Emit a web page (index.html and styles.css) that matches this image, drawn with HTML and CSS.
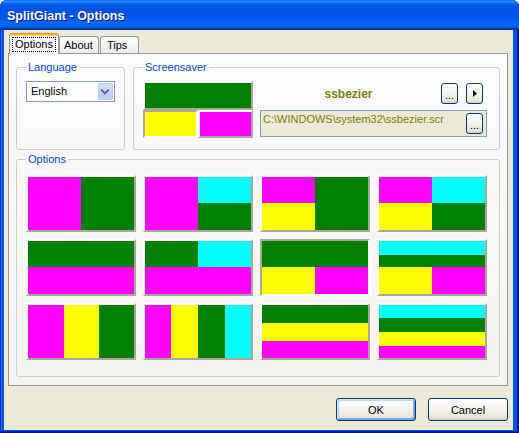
FILE: index.html
```html
<!DOCTYPE html>
<html lang="en">
<head>
<meta charset="utf-8">
<title>SplitGiant - Options</title>
<link rel="stylesheet" href="styles.css">
</head>
<body>
<div class="window">
  <div class="titlebar"><span class="title">SplitGiant - Options</span></div>
  <div class="client">
    <div class="tabs">
      <div class="tab active"><span class="focus">Options</span></div>
      <div class="tab about">About</div>
      <div class="tab tips">Tips</div>
    </div>
    <div class="panel">
      <div class="toprow">
        <fieldset class="group lang">
          <legend>Language</legend>
          <div class="combo">
            <span class="combo-text">English</span>
            <span class="combo-btn"><svg width="15" height="17" viewBox="0 0 15 17"><path d="M3.5 6.5 L7.5 10.5 L11.5 6.5" fill="none" stroke="#4d6185" stroke-width="2"/></svg></span>
          </div>
        </fieldset>
        <fieldset class="group saver">
          <legend>Screensaver</legend>
          <div class="saver-body">
            <div class="preview">
              <div class="pv pv-top raised g"></div>
              <div class="pv-row">
                <div class="pv sunken y"></div>
                <div class="pv raised m"></div>
              </div>
            </div>
            <div class="saver-right">
              <div class="saver-top">
                <span class="saver-name">ssbezier</span>
                <button class="btn small">...</button>
                <button class="btn small"><svg width="4" height="7" viewBox="0 0 4 7"><polygon points="0,0 4,3.5 0,7" fill="#000"/></svg></button>
              </div>
              <div class="pathbox">
                <span class="path">C:\WINDOWS\system32\ssbezier.scr</span>
                <button class="btn small">...</button>
              </div>
            </div>
          </div>
        </fieldset>
      </div>
      <fieldset class="group options">
        <legend>Options</legend>
        <div class="grid">
          <div class="opt"><div class="face cols2"><span class="m"></span><span class="g"></span></div></div>
          <div class="opt"><div class="face grid22"><span class="m tall"></span><span class="c"></span><span class="g"></span></div></div>
          <div class="opt"><div class="face grid22"><span class="m"></span><span class="g tall"></span><span class="y"></span></div></div>
          <div class="opt"><div class="face grid22"><span class="m"></span><span class="c"></span><span class="y"></span><span class="g"></span></div></div>

          <div class="opt"><div class="face rows2"><span class="g"></span><span class="m"></span></div></div>
          <div class="opt"><div class="face grid22"><span class="g"></span><span class="c"></span><span class="m wide"></span></div></div>
          <div class="opt pressed"><div class="face grid22"><span class="g wide"></span><span class="y"></span><span class="m"></span></div></div>
          <div class="opt"><div class="face stack22"><span class="c wide"></span><span class="g wide"></span><span class="y"></span><span class="m"></span></div></div>

          <div class="opt"><div class="face cols3"><span class="m"></span><span class="y"></span><span class="g"></span></div></div>
          <div class="opt"><div class="face cols4"><span class="m"></span><span class="y"></span><span class="g"></span><span class="c"></span></div></div>
          <div class="opt"><div class="face rows3"><span class="g"></span><span class="y"></span><span class="m"></span></div></div>
          <div class="opt"><div class="face rows4"><span class="c"></span><span class="g"></span><span class="y"></span><span class="m"></span></div></div>
        </div>
      </fieldset>
    </div>
    <div class="actions">
      <button class="btn big default">OK</button>
      <button class="btn big">Cancel</button>
    </div>
  </div>
</div>
</body>
</html>
```
FILE: styles.css
```css
* { box-sizing: border-box; }
html, body { margin: 0; padding: 0; }
body {
  width: 519px;
  height: 433px;
  overflow: hidden;
  background: #ffffff;
  font-family: "Liberation Sans", Arial, sans-serif;
  font-size: 11px;
  color: #000;
}

.window {
  width: 519px;
  height: 433px;
  display: flex;
  flex-direction: column;
  background: #0055e5;
  border-radius: 7px 7px 0 0;
  box-shadow: inset -1px -1px 0 #00138c, inset 1px 0 0 #0831d9, inset -2px -2px 0 #001ea0, inset 2px 0 0 #166aee;
}

.titlebar {
  height: 30px;
  flex: none;
  padding: 9px 0 0 7px;
  border-radius: 7px 7px 0 0;
  background: linear-gradient(to bottom, #0058ee 0%, #3593ff 4%, #288eff 6%, #127dff 8%, #036ffc 10%, #0262ee 14%, #0057e5 20%, #0054e3 24%, #0055eb 56%, #005bf5 66%, #026afe 76%, #0062ef 86%, #0052d6 92%, #0040ab 94%, #003092 100%);
}
.title {
  font-weight: bold;
  font-size: 12.5px;
  line-height: 14px;
  color: #fff;
  text-shadow: 1px 1px 0 #0a1883;
}

.client {
  flex: 1;
  margin: 0 6px 3px 4px;
  padding: 3px 5px 0 4px;
  background: #ece9d8;
  display: flex;
  flex-direction: column;
}

.tabs {
  height: 20px;
  display: flex;
  align-items: flex-end;
  padding-left: 1px;
}
.tab {
  height: 17px;
  border: 1px solid #919b9c;
  border-bottom: none;
  border-radius: 3px 3px 0 0;
  background: linear-gradient(#ffffff, #ecebe5);
  line-height: 16px;
  white-space: nowrap;
}
.tab.about { width: 40px; padding-left: 4px; }
.tab.tips { width: 39px; margin-left: 1px; padding-left: 6px; }
.tab.active {
  width: 50px;
  height: 21px;
  margin-bottom: -1px;
  position: relative;
  z-index: 1;
  border-top: none;
  border-radius: 3px 3px 0 0;
  padding: 4px 0 0 2px;
  background: linear-gradient(#e68b2c 0, #e68b2c 1px, #ffc73c 1px, #ffc73c 3px, #fcfcfe 3px, #fcfcfe 100%);
  line-height: 13px;
}
.focus {
  display: inline-block;
  border: 1px dotted #000;
  padding: 0 2px;
  line-height: 13px;
}

.panel {
  border: 1px solid #919b9c;
  background: linear-gradient(#fcfcfe, #f4f3ee);
  padding: 7px 7px 8px 7px;
}

.toprow {
  display: flex;
  gap: 8px;
  margin-bottom: 3px;
}

.group {
  margin: 0;
  min-width: 0;
  border: 1px solid #d0d0bf;
  border-radius: 3px;
  padding: 7px 9px 11px 9px;
}
.group legend {
  padding: 0 2px;
  color: #0046d5;
  line-height: 13px;
  font-size: 11px;
}
.lang { width: 109px; flex: none; }
.saver { flex: 1; padding-right: 12px; }

.combo {
  width: 89px;
  height: 21px;
  border: 1px solid #7f9db9;
  background: #fff;
  display: flex;
  padding-left: 4px;
}
.combo-text { flex: 1; line-height: 19px; }
.combo-btn {
  width: 15px;
  height: 17px;
  margin: 1px 1px 0 0;
  border: 1px solid #b9cbf6;
  border-radius: 2px;
  background: linear-gradient(#d6e1fd, #b6c9f8);
  display: flex;
}
.combo-btn svg { margin: -1px 0 0 -1px; }

.saver-body { display: flex; }
.preview {
  width: 110px;
  flex: none;
  display: flex;
  flex-direction: column;
}
.pv { border: 2px solid; }
.pv-top { height: 29px; }
.pv-row { display: flex; height: 28px; }
.pv-row .pv { flex: 1; }
.raised { border-color: #ffffff #aca899 #aca899 #ffffff; }
.sunken { border-color: #aca899 #ffffff #ffffff #aca899; }

.saver-right {
  flex: 1;
  margin-left: 7px;
  display: flex;
  flex-direction: column;
}
.saver-top {
  margin-top: 2px;
  height: 21px;
  display: flex;
  align-items: flex-start;
  gap: 8px;
  padding-right: 4px;
}
.saver-name {
  flex: 1;
  text-align: center;
  padding: 5px 0 0 4px;
  font-weight: bold;
  font-size: 12px;
  line-height: 13px;
  color: #808000;
}
.pathbox {
  margin-top: 6px;
  height: 27px;
  border: 1px solid #7f9db9;
  background: #ece9d8;
  display: flex;
  align-items: flex-start;
  padding: 1px 3px 0 2px;
}
.path {
  flex: 1;
  color: #808000;
  line-height: 13px;
  padding-top: 1px;
  white-space: nowrap;
}
.pathbox .btn { margin-top: 1px; }

.btn {
  font-family: "Liberation Sans", Arial, sans-serif;
  font-size: 11px;
  color: #000;
  border: 1px solid #003c74;
  border-radius: 3px;
  padding: 0;
  background: linear-gradient(#ffffff 0%, #f5f4f0 45%, #ece9d8 85%, #d6d0c5 100%);
  display: flex;
  align-items: center;
  justify-content: center;
}
.btn.small { width: 17px; height: 21px; flex: none; line-height: 19px; padding-top: 4px; }
.btn.small svg { margin-top: -4px; }
.btn.big { width: 80px; height: 23px; }
.btn.default {
  box-shadow: inset 1px 1px 0 #cee7ff, inset -1px -1px 0 #69a0e6, inset 2px 2px 0 #bcd4f6, inset -2px -2px 0 #89ade4;
}

.options { padding: 9px 12px 16px 9px; }
.grid {
  display: grid;
  grid-template-columns: repeat(4, 110px);
  grid-auto-rows: 57px;
  gap: 7px;
}
.opt {
  border: 2px solid;
  border-color: #ffffff #aca899 #aca899 #ffffff;
}
.opt.pressed { border-color: #aca899 #ffffff #ffffff #aca899; }
.face {
  display: grid;
  width: 100%;
  height: 100%;
}
.cols2 { grid-template-columns: 53px 53px; }
.cols3 { grid-template-columns: 36px 35px 35px; }
.cols4 { grid-template-columns: 26px 27px 27px 26px; }
.rows2 { grid-template-rows: 26px 27px; }
.rows3 { grid-template-rows: 18px 18px 17px; }
.rows4 { grid-template-rows: 13px 14px 14px 12px; }
.grid22 { grid-template-columns: 53px 53px; grid-template-rows: 26px 27px; }
.stack22 { grid-template-columns: 53px 53px; grid-template-rows: 14px 12px 27px; }
.tall { grid-row: span 2; }
.wide { grid-column: 1 / -1; }

.m { background: #ff00ff; }
.g { background: #008000; }
.c { background: #00ffff; }
.y { background: #ffff00; }

.actions {
  display: flex;
  justify-content: flex-end;
  gap: 12px;
  margin-top: 12px;
}
```
